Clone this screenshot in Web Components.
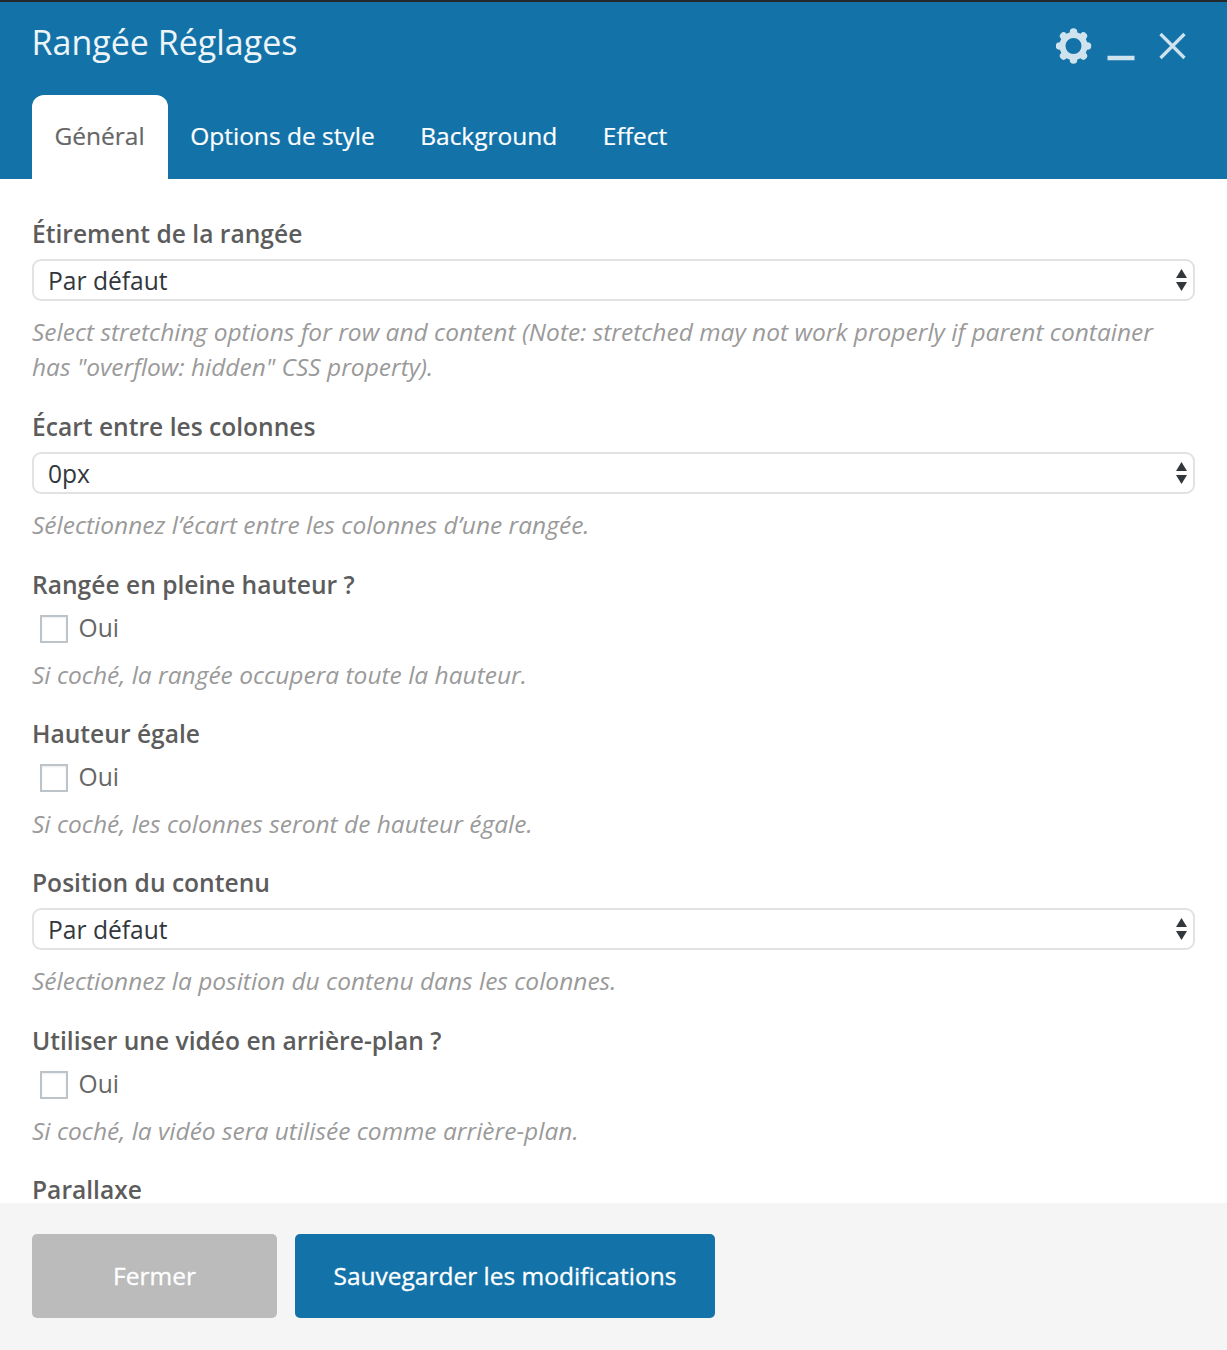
<!doctype html>
<html lang="fr">
<head>
<meta charset="utf-8">
<title>Rangée Réglages</title>
<style>
  html, body { margin: 0; padding: 0; height: 100%; }
  body { font-family: "Open Sans", "Liberation Sans", sans-serif; background: #fff; overflow: hidden; }
</style>
</head>
<body>
<row-dialog>
  <span slot="title">Rangée Réglages</span>
  <dialog-tab slot="tabs" active>Général</dialog-tab>
  <dialog-tab slot="tabs">Options de style</dialog-tab>
  <dialog-tab slot="tabs">Background</dialog-tab>
  <dialog-tab slot="tabs">Effect</dialog-tab>

  <form-field label="Étirement de la rangée">
    <select-box>Par défaut</select-box>
    <span slot="help">Select stretching options for row and content (Note: stretched may not work properly if parent container has "overflow: hidden" CSS property).</span>
  </form-field>
  <form-field label="Écart entre les colonnes">
    <select-box>0px</select-box>
    <span slot="help">Sélectionnez l’écart entre les colonnes d’une rangée.</span>
  </form-field>
  <form-field label="Rangée en pleine hauteur ?" check>
    <check-box>Oui</check-box>
    <span slot="help">Si coché, la rangée occupera toute la hauteur.</span>
  </form-field>
  <form-field label="Hauteur égale" check>
    <check-box>Oui</check-box>
    <span slot="help">Si coché, les colonnes seront de hauteur égale.</span>
  </form-field>
  <form-field label="Position du contenu">
    <select-box>Par défaut</select-box>
    <span slot="help">Sélectionnez la position du contenu dans les colonnes.</span>
  </form-field>
  <form-field label="Utiliser une vidéo en arrière-plan ?" check>
    <check-box>Oui</check-box>
    <span slot="help">Si coché, la vidéo sera utilisée comme arrière-plan.</span>
  </form-field>
  <form-field label="Parallaxe"></form-field>

  <dialog-button slot="footer" kind="close">Fermer</dialog-button>
  <dialog-button slot="footer" kind="save">Sauvegarder les modifications</dialog-button>
</row-dialog>

<script>
const dialogTemplate = document.createElement('template');
dialogTemplate.innerHTML = `
  <style>
    :host{display: flex; flex-direction: column; height: 1350px; color: #5f5f5f;}
    #head{background: #1373a9; border-top: 2px solid #23282d; height: 179px; flex: none; display: flex; flex-direction: column; padding: 0 32px; box-sizing: border-box;}
    #top{display: flex; align-items: flex-start; justify-content: space-between; height: 93px;}
    #title{font-size: 34px; line-height: 45px; margin: 18px 0 0 -0.5px; color: #eef5f9; letter-spacing: 0;}
    #icons{display: block; margin: 26px 7px 0 0;}
    #tabs{display: flex;}
    #body{flex: 1; min-height: 0; overflow: hidden; padding: 36.5px 32px 0;}
    #foot{flex: none; height: 147px; box-sizing: border-box; background: #f5f5f5; padding: 31px 32px 0; display: flex; gap: 18px; align-items: flex-start;}
  </style>
  <div id="head">
    <div id="top">
      <div id="title"><slot name="title"></slot></div>
      <svg id="icons" width="132" height="36" viewBox="0 0 132 36" fill="none" stroke="#cfe3ee">
        <g transform="translate(17.5 18)">
          <circle r="11" stroke-width="6"/>
          <path stroke-width="7.5" stroke-linecap="round" d="M0-13.5V-14M9.5-9.5L9.9-9.9M13.5 0H14M9.5 9.5L9.9 9.9M0 13.5V14M-9.5 9.5L-9.9 9.9M-13.5 0H-14M-9.5-9.5L-9.9-9.9"/>
        </g>
        <path stroke-width="4.5" d="M51.5 30H78.5"/>
        <path stroke-width="3.2" d="M104.5 6L128.5 30M128.5 6L104.5 30"/>
      </svg>
    </div>
    <div id="tabs"><slot name="tabs"></slot></div>
  </div>
  <div id="body"><slot></slot></div>
  <div id="foot"><slot name="footer"></slot></div>
`;
class RowDialog extends HTMLElement {
  constructor() {
    super();
    this.attachShadow({ mode: 'open' });
    this.shadowRoot.appendChild(dialogTemplate.content.cloneNode(true));
  }
}
customElements.define('row-dialog', RowDialog);

const tabTemplate = document.createElement('template');
tabTemplate.innerHTML = `
  <style>
    :host{display: block; height: 84px; box-sizing: border-box; padding: 24px 23px 0 22.5px; font-size: 24.5px; line-height: 34px; color: #fff; border-radius: 12px 12px 0 0; -webkit-text-stroke: 0.2px currentColor;}
    :host([active]){background: #fff; color: #666;}
  </style>
  <slot></slot>
`;
class DialogTab extends HTMLElement {
  constructor() {
    super();
    this.attachShadow({ mode: 'open' });
    this.shadowRoot.appendChild(tabTemplate.content.cloneNode(true));
  }
}
customElements.define('dialog-tab', DialogTab);

const fieldTemplate = document.createElement('template');
fieldTemplate.innerHTML = `
  <style>
    :host{display: block; margin-bottom: 25px;}
    :host([check]){margin-bottom: 24px;}
    #label{font-size: 24.6px; line-height: 35px; font-weight: 600; color: #5c5c5c; margin-bottom: 8.5px;}
    :host([check]) #label{margin-bottom: 0;}
    #help{font-size: 24.5px; line-height: 35px; font-style: italic; color: #9a9a9a; margin-top: 12.5px;}
    :host([check]) #help{margin-top: 0;}
  </style>
  <div id="label"></div>
  <slot></slot>
  <div id="help"><slot name="help"></slot></div>
`;
class FormField extends HTMLElement {
  constructor() {
    super();
    this.attachShadow({ mode: 'open' });
    this.shadowRoot.appendChild(fieldTemplate.content.cloneNode(true));
  }
  connectedCallback() {
    this.shadowRoot.getElementById("label").innerText = this.getAttribute("label") || ""
  }
}
customElements.define('form-field', FormField);

const selectTemplate = document.createElement('template');
selectTemplate.innerHTML = `
  <style>
    :host{display: flex; align-items: center; justify-content: space-between; height: 42px; box-sizing: border-box; border: 2px solid #e2e2e2; border-radius: 9px; background: #fff; padding: 0 6px 0 14px; font-size: 24.6px; color: #32373c;}
    svg{display: block; flex: none;}
  </style>
  <span><slot></slot></span>
  <svg width="11" height="22" viewBox="0 0 11 22" fill="#32373c"><path d="M5.5 0L11 9H0Z"/><path d="M0 13H11L5.5 22Z"/></svg>
`;
class SelectBox extends HTMLElement {
  constructor() {
    super();
    this.attachShadow({ mode: 'open' });
    this.shadowRoot.appendChild(selectTemplate.content.cloneNode(true));
  }
}
customElements.define('select-box', SelectBox);

const checkTemplate = document.createElement('template');
checkTemplate.innerHTML = `
  <style>
    :host{display: flex; align-items: center; height: 55px; padding-left: 8px; font-size: 24.6px; color: #666;}
    #box{width: 28px; height: 28px; box-sizing: border-box; border: 2px solid #bcc4c9; background: #fff; box-shadow: inset 0 1px 2px rgba(0,0,0,.08); margin-right: 10.5px; flex: none;}
    span{position: relative; top: -2px;}
  </style>
  <div id="box"></div>
  <span><slot></slot></span>
`;
class CheckBox extends HTMLElement {
  constructor() {
    super();
    this.attachShadow({ mode: 'open' });
    this.shadowRoot.appendChild(checkTemplate.content.cloneNode(true));
  }
}
customElements.define('check-box', CheckBox);

const buttonTemplate = document.createElement('template');
buttonTemplate.innerHTML = `
  <style>
    :host{display: flex; align-items: center; justify-content: center; height: 84px; box-sizing: border-box; border-radius: 5px; font-size: 24.5px; color: #fff; padding: 0 38.5px 2px; -webkit-text-stroke: 0.3px currentColor;}
    :host([kind=close]){background: #bbb; width: 245px; padding: 0 0 2px;}
    :host([kind=save]){background: #1373a9;}
  </style>
  <slot></slot>
`;
class DialogButton extends HTMLElement {
  constructor() {
    super();
    this.attachShadow({ mode: 'open' });
    this.shadowRoot.appendChild(buttonTemplate.content.cloneNode(true));
  }
}
customElements.define('dialog-button', DialogButton);
</script>
</body>
</html>
